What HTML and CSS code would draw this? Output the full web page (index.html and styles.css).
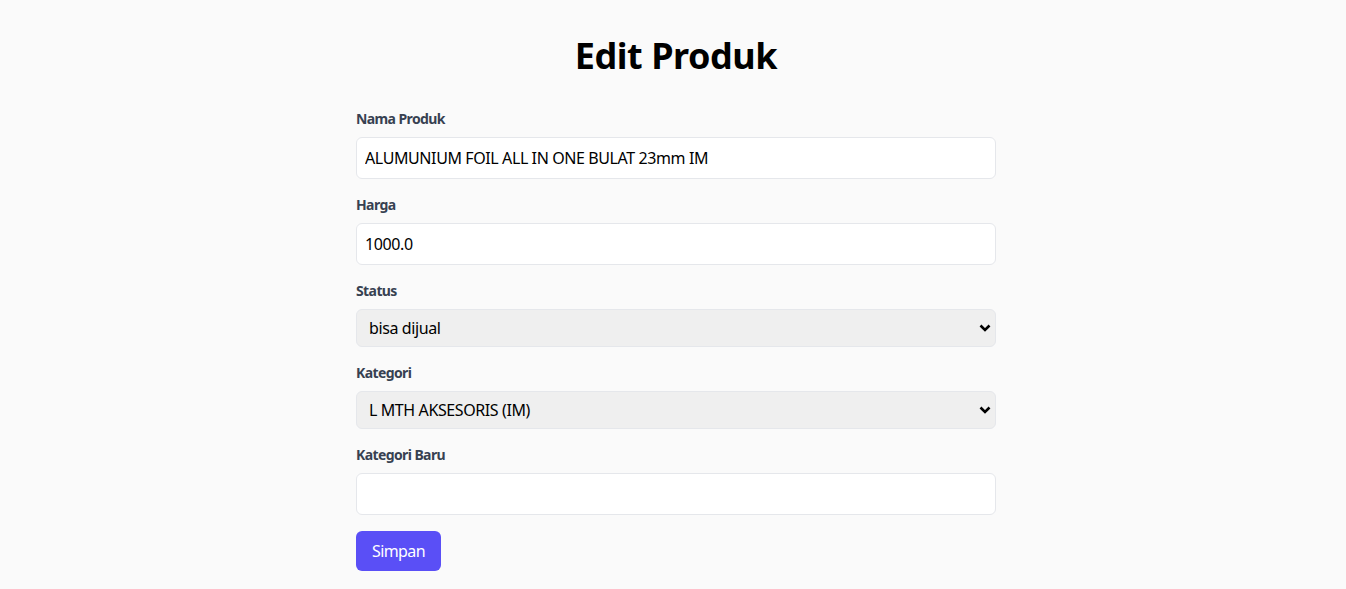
FILE: index.html
```html
<!DOCTYPE html>
<html lang="id">
<head>
<meta charset="utf-8">
<title>Edit Produk</title>
<link rel="stylesheet" href="styles.css">
</head>
<body>
<main class="page">
  <h1 class="title">Edit Produk</h1>
  <form class="form">
    <div class="field">
      <label class="label" for="nama">Nama Produk</label>
      <input class="input" id="nama" type="text" value="ALUMUNIUM FOIL ALL IN ONE BULAT 23mm IM">
    </div>
    <div class="field">
      <label class="label" for="harga">Harga</label>
      <input class="input" id="harga" type="text" value="1000.0">
    </div>
    <div class="field">
      <label class="label" for="status">Status</label>
      <select class="select" id="status">
        <option>bisa dijual</option>
      </select>
    </div>
    <div class="field">
      <label class="label" for="kategori">Kategori</label>
      <select class="select" id="kategori">
        <option>L MTH AKSESORIS (IM)</option>
      </select>
    </div>
    <div class="field">
      <label class="label" for="baru">Kategori Baru</label>
      <input class="input" id="baru" type="text" value="">
    </div>
    <button class="button" type="button">Simpan</button>
  </form>
</main>
</body>
</html>
```
FILE: styles.css
```css
* { box-sizing: border-box; }
html, body { margin: 0; padding: 0; }
body {
  background: #fafafa;
  font-family: "Noto Sans", "DejaVu Sans", sans-serif;
  color: #000;
  padding-left: 6px;
}
.page {
  width: 640px;
  margin: 0 auto;
  padding-top: 36px;
}
.title {
  margin: 0 0 33px;
  font-size: 36px;
  line-height: 40px;
  font-weight: 700;
  text-align: center;
  letter-spacing: -0.45px;
}
.form {
  display: flex;
  flex-direction: column;
}
.field {
  display: flex;
  flex-direction: column;
  gap: 8px;
  margin-bottom: 16px;
}
.label {
  font-size: 14px;
  line-height: 20px;
  font-weight: 700;
  color: #374151;
  letter-spacing: -0.6px;
}
.input, .select {
  font-family: inherit;
  font-size: 16px;
  letter-spacing: -0.4px;
  color: #000;
  width: 100%;
  border: 1px solid #e5e7eb;
  border-radius: 6px;
  padding: 0 8px;
  outline: none;
}
.input {
  height: 42px;
  background: #fff;
}
.select {
  height: 38px;
  padding-left: 12px;
  background-color: #efefef;
  -webkit-appearance: none;
  appearance: none;
  background-image: url("data:image/svg+xml;utf8,<svg xmlns='http://www.w3.org/2000/svg' width='12' height='8' viewBox='0 0 12 8'><path d='M1.5 1.5 6 6 10.5 1.5' fill='none' stroke='black' stroke-width='2.6'/></svg>");
  background-repeat: no-repeat;
  background-position: right 4px center;
}
.button {
  align-self: flex-start;
  height: 40px;
  width: 85px;
  border: 0;
  border-radius: 6px;
  background: #5a4ff6;
  color: #fff;
  font-family: inherit;
  font-size: 16px;
  letter-spacing: -0.6px;
}
```
